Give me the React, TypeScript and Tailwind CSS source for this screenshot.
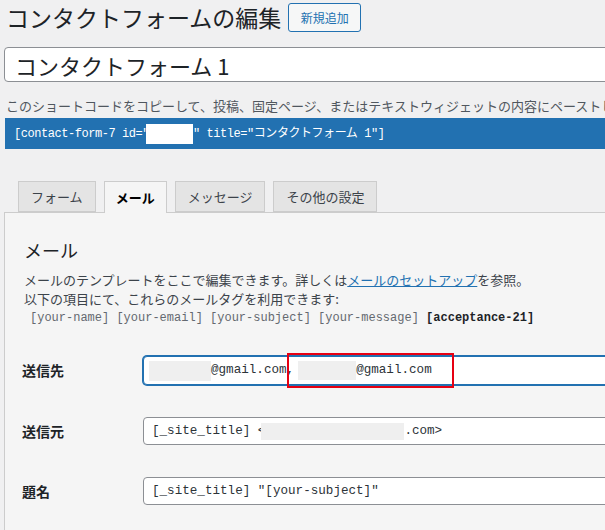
import React from "react";

const jp = "font-['Noto_Sans_CJK_JP','Noto_Sans',sans-serif]";
const mono = "font-['Liberation_Mono','Noto_Sans_CJK_JP',monospace]";

function Tab({ label, active }: { label: string; active?: boolean }) {
  if (active) {
    return (
      <div className="relative z-10 -mb-px flex h-[32px] items-center border border-b-0 border-[#cccccc] bg-[#f5f5f5] px-[11px] text-[13px] font-bold text-black">
        {label}
      </div>
    );
  }
  return (
    <div className="flex h-[31px] items-center border border-[#cccccc] bg-[#e4e4e4] px-[12px] text-[13px] text-[#3c434a]">
      {label}
    </div>
  );
}

export default function App() {
  return (
    <div className={`relative flex h-[530px] w-[605px] flex-col overflow-hidden bg-[#f0f0f1] text-[#1d2327] ${jp}`}>
      {/* header */}
      <div className="mt-[3px] flex h-[29px] items-center pl-[6px]">
        <h1 className="whitespace-nowrap text-[23px] font-normal leading-[29px] text-[#1d2327]">
          コンタクトフォームの編集
        </h1>
        <button className="ml-[7px] flex h-[29px] w-[73px] items-center justify-center rounded-[3px] border border-[#2271b1] bg-[#f6f7f7] text-[12px] text-[#2271b1]">
          新規追加
        </button>
      </div>

      {/* title input */}
      <div className="ml-[4px] mt-[15px] flex h-[35px] w-[640px] shrink-0 items-center rounded-[4px] border border-[#8c8f94] bg-white pl-[10px] text-[22px] leading-none text-[#1d2327]">
        コンタクトフォーム 1
      </div>

      {/* description */}
      <p className="ml-[6px] mt-[15px] whitespace-nowrap text-[13px] leading-[18px] text-[#50575e]">
        このショートコードをコピーして、投稿、固定ページ、またはテキストウィジェットの内容にペーストしてください。
      </p>

      {/* shortcode bar */}
      <div className={`ml-[5px] mt-[3px] flex h-[31px] w-[640px] shrink-0 items-center bg-[#2271b1] pl-[9px] text-[12px] tracking-[-0.45px] text-white ${mono}`}>
        <span className="whitespace-pre">[contact-form-7 id="</span>
        <span className="-ml-[3px] inline-block h-[20px] w-[47px] bg-white" />
        <span className="whitespace-pre">" title="コンタクトフォーム 1"]</span>
      </div>

      {/* tabs */}
      <div className="mt-[32px] flex items-end gap-[8px] pl-[18px]">
        <Tab label="フォーム" />
        <Tab label="メール" active />
        <Tab label="メッセージ" />
        <Tab label="その他の設定" />
      </div>

      {/* panel */}
      <div className="ml-[4px] w-[640px] flex-1 border-l border-t border-[#cccccc] bg-[#f5f5f5] pl-[17px]">
        <h2 className="ml-[2px] mt-[25px] text-[18px] font-normal leading-[24px] text-[#1d2327]">メール</h2>
        <p className="ml-[2px] mt-[8px] whitespace-nowrap text-[13px] leading-[19px] text-[#3c434a]">
          メールのテンプレートをここで編集できます。詳しくは
          <span className="text-[#2271b1] underline">メールのセットアップ</span>
          を参照。
        </p>
        <p className="ml-[2px] whitespace-nowrap text-[13px] leading-[19px] text-[#3c434a]">
          以下の項目にて、これらのメールタグを利用できます:
        </p>
        <p className={`ml-[8px] whitespace-pre text-[12px] leading-[21px] text-[#646970] ${mono}`}>
          [your-name] [your-email] [your-subject] [your-message]{" "}
          <span className="font-bold text-[#1d2327]">[acceptance-21]</span>
        </p>

        {/* row 1 */}
        <div className="mt-[27px] flex items-center">
          <div className="w-[121px] shrink-0 text-[14px] font-bold">送信先</div>
          <div className="relative shrink-0">
            <div className={`flex h-[29px] w-[480px] items-center rounded-[4px] border border-[#2271b1] bg-white pl-[5px] text-[12.6px] text-[#2c3338] ring-1 ring-[#2271b1] ${mono}`}>
              <span className="inline-block h-[20px] w-[62px] bg-[#efefef]" />
              <span className="whitespace-pre">@gmail.com,</span>
              <span className="ml-[4px] inline-block h-[19px] w-[58px] bg-[#efefef]" />
              <span className="whitespace-pre">@gmail.com</span>
            </div>
            <div className="absolute left-[144px] top-[-3px] h-[35px] w-[167px] border-2 border-[#e60012]" />
          </div>
        </div>

        {/* row 2 */}
        <div className="mt-[32px] flex items-center">
          <div className="w-[121px] shrink-0 text-[14px] font-bold">送信元</div>
          <div className={`flex h-[28px] w-[480px] shrink-0 items-center rounded-[4px] border border-[#8c8f94] bg-white pl-[8px] text-[12.6px] text-[#2c3338] ${mono}`}>
            <span className="whitespace-pre">[_site_title] &lt;</span>
            <span className="-ml-[4px] inline-block h-[17px] w-[143px] bg-[#efefef]" />
            <span className="whitespace-pre">.com&gt;</span>
          </div>
        </div>

        {/* row 3 */}
        <div className="mt-[32px] flex items-center">
          <div className="w-[121px] shrink-0 text-[14px] font-bold">題名</div>
          <div className={`flex h-[28px] w-[480px] shrink-0 items-center rounded-[4px] border border-[#8c8f94] bg-white pl-[8px] text-[12.6px] text-[#2c3338] ${mono}`}>
            <span className="whitespace-pre">[_site_title] "[your-subject]"</span>
          </div>
        </div>
      </div>
    </div>
  );
}
